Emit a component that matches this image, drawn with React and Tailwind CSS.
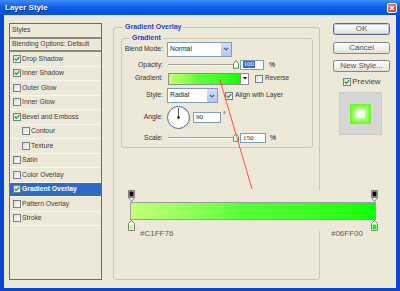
import React from 'react';

const styleRows = [
  { name: 'Drop Shadow', on: true },
  { name: 'Inner Shadow', on: true },
  { name: 'Outer Glow' },
  { name: 'Inner Glow' },
  { name: 'Bevel and Emboss', on: true },
  { name: 'Contour', sub: true },
  { name: 'Texture', sub: true },
  { name: 'Satin' },
  { name: 'Color Overlay' },
  { name: 'Gradient Overlay', on: true, active: true },
  { name: 'Pattern Overlay' },
  { name: 'Stroke' },
];

function Check({ on }) {
  return (
    <span className="w-[8px] h-[8px] shrink-0 border border-[#72808F] bg-gradient-to-br from-[#DCDBD3] to-white flex items-center justify-center">
      {on && (
        <svg width="6" height="6" viewBox="0 0 6 6">
          <path d="M0.8 2.8 L2.3 4.4 L5.3 1.2" fill="none" stroke="#1E9E1E" strokeWidth="1.3" />
        </svg>
      )}
    </span>
  );
}

function Select({ value, w }) {
  return (
    <div className={`h-[15px] ${w} ml-[4px] border border-[#7F9DB9] bg-white flex items-center`}>
      <span className="flex-1 pl-[2px] text-[6.8px] leading-none text-[#222]">{value}</span>
      <span className="w-[10px] h-[13px] mr-[0.5px] rounded-[1px] bg-gradient-to-b from-[#D3DEFB] to-[#B1C6F5] flex items-center justify-center">
        <svg width="6" height="4" viewBox="0 0 6 4">
          <path d="M0.8 0.8 L3 3 L5.2 0.8" fill="none" stroke="#4D6185" strokeWidth="1.2" />
        </svg>
      </span>
    </div>
  );
}

function Slider() {
  return (
    <div className="relative w-[69px] h-[10px] ml-[5px] flex items-center">
      <div className="w-full h-[2px] border-t border-[#A3A198] border-b border-b-white" />
      <svg className="absolute right-[-2px] top-[0px]" width="6" height="9" viewBox="0 0 6 9">
        <path d="M0.5 3.5 L3 0.7 L5.5 3.5 L5.5 8.3 L0.5 8.3 Z" fill="#F4F7F0" stroke="#4F9A5A" strokeWidth="1" />
      </svg>
    </div>
  );
}

function Input({ w, children }) {
  return (
    <div className={`h-full ${w} ml-[3px] border border-[#7F9DB9] bg-white flex items-center pl-[2px] text-[7px] leading-none text-[#222] font-['Liberation_Serif',serif]`}>
      {children}
    </div>
  );
}

function Label({ children }) {
  return <span className="w-[41px] shrink-0 text-right text-[6.8px] leading-none text-[#333]">{children}</span>;
}

function TopStop() {
  return (
    <svg width="7" height="12" viewBox="0 0 7 12">
      <path d="M0.5 7.5 L3.5 11.5 L6.5 7.5" fill="#fff" stroke="#808080" strokeWidth="1" />
      <rect x="0.5" y="0.5" width="6" height="7" fill="#E4E4E4" stroke="#808080" strokeWidth="1" />
      <rect x="1.5" y="1.5" width="4" height="5" fill="#000" />
    </svg>
  );
}

function BottomStop({ color }) {
  return (
    <svg width="7" height="11" viewBox="0 0 7 11">
      <path d="M3.5 0.5 L6.5 3.5 L6.5 10.5 L0.5 10.5 L0.5 3.5 Z" fill="#fff" stroke="#808080" strokeWidth="1" />
      <rect x="1.5" y="4.5" width="4" height="5" fill={color} />
    </svg>
  );
}

function Button({ children, primary }) {
  return (
    <div
      className={`h-[12px] w-full rounded-[2.5px] border bg-gradient-to-b from-white to-[#E4E2D8] flex items-center justify-center text-[8px] leading-none text-[#555] ${
        primary ? 'border-[#4F6C9C] shadow-[inset_0_0_0_1px_#B9CCF2]' : 'border-[#7C8796]'
      }`}
    >
      {children}
    </div>
  );
}

export default function App() {
  return (
    <div className="relative w-[400px] h-[291px] bg-[#0B47D6] flex flex-col overflow-hidden font-['Liberation_Sans',Arial,sans-serif]">
      {/* title bar */}
      <div className="h-[15px] shrink-0 flex items-center bg-gradient-to-b from-[#3D8BF7] via-[#0A5DE8] to-[#0752DA]">
        <span className="pl-[5px] flex-1 text-[8px] font-bold leading-none text-white [text-shadow:1px_1px_0_#0A2F8A]">Layer Style</span>
        <span className="w-[10px] h-[10px] mr-[3px] rounded-[2px] border border-white bg-gradient-to-br from-[#EE7A55] to-[#C8381A] flex items-center justify-center">
          <svg width="6" height="6" viewBox="0 0 6 6">
            <path d="M1 1 L5 5 M5 1 L1 5" stroke="#fff" strokeWidth="1.3" />
          </svg>
        </span>
      </div>

      <div className="flex-1 ml-[4px] mr-[4px] mb-[3px] bg-[#ECE9D8] flex items-start">
        {/* styles list */}
        <div className="ml-[5px] mt-[7.7px] w-[93px] h-[257px] border border-[#6E6B60] text-[6.8px] leading-none text-[#3C3C3C]">
          <div className="h-[15px] flex items-center pl-[2px] border-b-2 border-[#8A877B]">Styles</div>
          <div className="h-[13.5px] flex items-center pl-[2px] border-b-2 border-[#8A877B]">Blending Options: Default</div>
          {styleRows.map((r) => (
            <div
              key={r.name}
              className={`h-[14.5px] flex items-center gap-[1px] border-b border-[#F7F6F0] ${r.sub ? 'pl-[12px]' : 'pl-[3px]'} ${
                r.active ? 'bg-[#316AC5] text-white font-bold' : ''
              }`}
            >
              <Check on={r.on} />
              <span>{r.name}</span>
            </div>
          ))}
        </div>

        {/* gradient overlay group */}
        <div className="relative ml-[11px] mt-[12.3px] w-[207px] h-[253px] border border-[#CAC7B7] rounded-[3px] pl-[7px]">
          <span className="absolute left-[9px] top-[-5px] px-[2px] bg-[#ECE9D8] text-[7px] font-bold leading-none text-[#1D3FCF]">Gradient Overlay</span>

          <div className="relative mt-[9.4px] w-[192px] h-[110px] border border-[#CAC7B7] rounded-[3px] pt-[3.3px]">
            <span className="absolute left-[8px] top-[-4.5px] px-[2px] bg-[#ECE9D8] text-[7px] font-bold leading-none text-[#1D3FCF]">Gradient</span>

            <div className="h-[15px] flex items-center">
              <Label>Blend Mode:</Label>
              <Select value="Normal" w="w-[65px]" />
            </div>

            <div className="h-[10px] mt-[3px] flex items-center">
              <Label>Opacity:</Label>
              <Slider />
              <Input w="w-[24px]">
                <span className="bg-[#316AC5] text-white px-[0.5px]">100</span>
              </Input>
              <span className="ml-[5px] text-[6.8px] leading-none">%</span>
            </div>

            <div className="h-[12px] mt-[2.7px] flex items-center">
              <Label>Gradient:</Label>
              <div className="ml-[5px] h-full flex border border-[#8E8E8E]">
                <div className="w-[71px] h-full bg-gradient-to-r from-[#C1FF76] via-[#5CFF36] via-40% to-[#06FF00]" />
                <div className="w-[8px] h-full bg-white border-l border-[#8E8E8E] flex items-center justify-center">
                  <svg width="4" height="3" viewBox="0 0 4 3">
                    <path d="M0 0 L4 0 L2 2.5 Z" fill="#000" />
                  </svg>
                </div>
              </div>
              <span className="ml-[6px]">
                <Check />
              </span>
              <span className="ml-[2px] text-[6.5px] leading-none text-[#333]">Reverse</span>
            </div>

            <div className="h-[15px] mt-[3.6px] flex items-center">
              <Label>Style:</Label>
              <Select value="Radial" w="w-[51px]" />
              <span className="ml-[7px]">
                <Check on />
              </span>
              <span className="ml-[2px] text-[6.8px] leading-none text-[#333]">Align with Layer</span>
            </div>

            <div className="h-[23px] mt-[2.4px] flex items-center">
              <Label>Angle:</Label>
              <div className="ml-[4px] w-[23px] h-[23px] rounded-full border border-[#56658A] bg-[radial-gradient(circle,#ffffff_55%,#E7EAF2)] flex items-center justify-center relative">
                <svg className="absolute inset-0" width="21" height="21" viewBox="0 0 21 21">
                  <line x1="10.5" y1="10.5" x2="10.5" y2="1" stroke="#333" strokeWidth="0.8" />
                  <circle cx="10.5" cy="10.5" r="1.2" fill="#000" />
                </svg>
              </div>
              <div className="h-[11px]">
                <Input w="w-[28px]">90</Input>
              </div>
              <span className="ml-[2px] self-start mt-[6px] text-[6.5px] leading-none">°</span>
            </div>

            <div className="h-[9.7px] mt-[4.6px] flex items-center">
              <Label>Scale:</Label>
              <Slider />
              <Input w="w-[26px]">150</Input>
              <span className="ml-[4px] text-[6.8px] leading-none">%</span>
            </div>
          </div>

          {/* gradient editor */}
          <div className="mt-[42.3px] ml-[3px] w-[258px] px-[4px] bg-[#ECE9D8]">
            <div className="h-[12px] flex justify-between">
              <TopStop />
              <TopStop />
            </div>
            <div className="h-[18.4px] mx-[2px] border border-[#9C9C9C] bg-gradient-to-r from-[#C1FF76] via-[#55FF36] via-45% to-[#06FF00]" />
            <div className="h-[11px] flex justify-between">
              <BottomStop color="#C1FF76" />
              <BottomStop color="#06FF00" />
            </div>
          </div>
          <div className="ml-[3px] w-[258px] mt-[-2px] h-[10px] flex justify-between items-center pl-[16px] pr-[19px] text-[8px] leading-none text-[#5C5C5C]">
            <span>#C1FF76</span>
            <span>#06FF00</span>
          </div>
        </div>

        {/* buttons */}
        <div className="ml-[13px] mt-[8.3px] w-[57px] flex flex-col">
          <Button primary>OK</Button>
          <div className="mt-[6.5px]">
            <Button>Cancel</Button>
          </div>
          <div className="mt-[6.5px]">
            <Button>New Style...</Button>
          </div>
          <div className="mt-[6px] ml-[9.7px] h-[8px] flex items-center gap-[1.5px]">
            <Check on />
            <span className="text-[8px] leading-none text-[#444]">Preview</span>
          </div>
          <div className="mt-[6px] ml-[6.3px] w-[43px] h-[42.7px] bg-[#D6D6D4] border border-[#CACAC6] flex items-center justify-center">
            <div className="w-[21px] h-[20px] bg-[#7CFF3E] shadow-[inset_0_0_3px_1px_#6AF02E] flex items-center justify-center">
              <div className="w-[9px] h-[8px] bg-[#F6FFEC] shadow-[0_0_3px_2px_#C6FFA0]" />
            </div>
          </div>
        </div>
      </div>

      {/* red annotation line */}
      <svg className="absolute inset-0 pointer-events-none" width="400" height="291" viewBox="0 0 400 291">
        <line x1="220" y1="80" x2="252" y2="189" stroke="#FF3B3B" strokeWidth="0.9" />
      </svg>
    </div>
  );
}
